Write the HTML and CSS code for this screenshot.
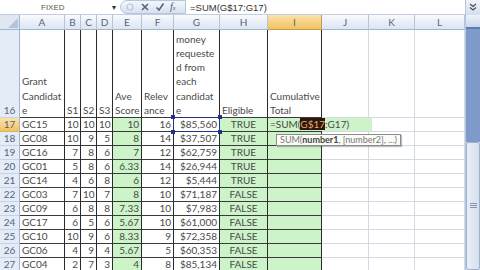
FILE: index.html
```html
<!DOCTYPE html>
<html>
<head>
<meta charset="utf-8">
<link rel="stylesheet" href="styles.css">
</head>
<body>
<div class="app">
  <div class="fbar">
    <div class="namebox"><span class="nb-text">FIXED</span></div>
    <div class="nb-dd">▾</div>
    <div class="fbtns">
      <svg class="ic" width="10" height="10" viewBox="0 0 10 10"><circle cx="5" cy="5" r="3" fill="none" stroke="#b9c6d8" stroke-width="1.2"/></svg>
      <svg class="ic" width="10" height="10" viewBox="0 0 10 10"><path d="M2 2 L8 8 M8 2 L2 8" stroke="#56657a" stroke-width="1.6"/></svg>
      <svg class="ic" width="10" height="10" viewBox="0 0 10 10"><path d="M1.5 5.5 L4 8 L8.5 1.5" fill="none" stroke="#56657a" stroke-width="1.6"/></svg>
      <span class="fx">f<span class="fxs">x</span></span>
    </div>
    <div class="formula">=SUM(G$17:G17)</div>
    <div class="expand"><svg width="10" height="10" viewBox="0 0 10 10"><path d="M2 2 L5 4.5 L8 2 M2 5.5 L5 8 L8 5.5" fill="none" stroke="#3e4d63" stroke-width="1.2"/></svg></div>
  </div>
  <div class="main">
    <div class="grid">
      <!-- header row -->
      <div class="corner"><svg width="10" height="10" viewBox="0 0 10 10"><path d="M10 0 L10 10 L0 10 Z" fill="#b6c4d8"/></svg></div>
      <div class="ch">A</div><div class="ch">B</div><div class="ch">C</div><div class="ch">D</div><div class="ch">E</div><div class="ch">F</div><div class="ch">G</div><div class="ch">H</div><div class="ch sel">I</div><div class="ch">J</div><div class="ch">K</div><div class="ch">L</div>
      <!-- row 16 -->
      <div class="rh bot">16</div>
      <div class="t hd">Grant<br>Candidat<br>e</div>
      <div class="t hd">S1</div>
      <div class="t hd">S2</div>
      <div class="t hd">S3</div>
      <div class="t hd">Ave<br>Score</div>
      <div class="t hd">Relev<br>ance</div>
      <div class="t hd">money<br>requeste<br>d from<br>each<br>candidat<br>e</div>
      <div class="t hd">Eligible</div>
      <div class="t hd">Cumulative<br>Total</div>
      <div class="c"></div><div class="c"></div><div class="c"></div>
      <!-- row 17 -->
      <div class="rh sel">17</div>
      <div class="t">GC15</div><div class="t r">10</div><div class="t r">10</div><div class="t r">10</div><div class="t r g">10</div><div class="t r">16</div>
      <div class="t r rel">$85,560<span class="refbox"><i class="h tl"></i><i class="h tr"></i><i class="h bl"></i><i class="h br"></i></span></div>
      <div class="t m g">TRUE</div>
      <div class="t g rel"><span class="editor">=SUM(<span class="selref">G$17</span>:G17)</span><span class="tip">SUM(<b>number1</b>, [number2], ...)</span></div>
      <div class="c"></div><div class="c"></div><div class="c"></div>
      <!-- row 18 -->
      <div class="rh">18</div>
      <div class="t">GC08</div><div class="t r">10</div><div class="t r">9</div><div class="t r">5</div><div class="t r g">8</div><div class="t r">14</div><div class="t r">$37,507</div><div class="t m g">TRUE</div><div class="t g"></div>
      <div class="c"></div><div class="c"></div><div class="c"></div>
      <!-- row 19 -->
      <div class="rh">19</div>
      <div class="t">GC16</div><div class="t r">7</div><div class="t r">8</div><div class="t r">6</div><div class="t r g">7</div><div class="t r">12</div><div class="t r">$62,759</div><div class="t m g">TRUE</div><div class="t g"></div>
      <div class="c"></div><div class="c"></div><div class="c"></div>
      <!-- row 20 -->
      <div class="rh">20</div>
      <div class="t">GC01</div><div class="t r">5</div><div class="t r">8</div><div class="t r">6</div><div class="t r g">6.33</div><div class="t r">14</div><div class="t r">$26,944</div><div class="t m g">TRUE</div><div class="t g"></div>
      <div class="c"></div><div class="c"></div><div class="c"></div>
      <!-- row 21 -->
      <div class="rh">21</div>
      <div class="t">GC14</div><div class="t r">4</div><div class="t r">6</div><div class="t r">8</div><div class="t r g">6</div><div class="t r">12</div><div class="t r">$5,444</div><div class="t m g">TRUE</div><div class="t g"></div>
      <div class="c"></div><div class="c"></div><div class="c"></div>
      <!-- row 22 -->
      <div class="rh">22</div>
      <div class="t">GC03</div><div class="t r">7</div><div class="t r">10</div><div class="t r">7</div><div class="t r g">8</div><div class="t r">10</div><div class="t r">$71,187</div><div class="t m g">FALSE</div><div class="t g"></div>
      <div class="c"></div><div class="c"></div><div class="c"></div>
      <!-- row 23 -->
      <div class="rh">23</div>
      <div class="t">GC09</div><div class="t r">6</div><div class="t r">8</div><div class="t r">8</div><div class="t r g">7.33</div><div class="t r">10</div><div class="t r">$7,983</div><div class="t m g">FALSE</div><div class="t g"></div>
      <div class="c"></div><div class="c"></div><div class="c"></div>
      <!-- row 24 -->
      <div class="rh">24</div>
      <div class="t">GC17</div><div class="t r">6</div><div class="t r">5</div><div class="t r">6</div><div class="t r g">5.67</div><div class="t r">10</div><div class="t r">$61,000</div><div class="t m g">FALSE</div><div class="t g"></div>
      <div class="c"></div><div class="c"></div><div class="c"></div>
      <!-- row 25 -->
      <div class="rh">25</div>
      <div class="t">GC10</div><div class="t r">10</div><div class="t r">9</div><div class="t r">6</div><div class="t r g">8.33</div><div class="t r">9</div><div class="t r">$72,358</div><div class="t m g">FALSE</div><div class="t g"></div>
      <div class="c"></div><div class="c"></div><div class="c"></div>
      <!-- row 26 -->
      <div class="rh">26</div>
      <div class="t">GC06</div><div class="t r">4</div><div class="t r">9</div><div class="t r">4</div><div class="t r g">5.67</div><div class="t r">5</div><div class="t r">$60,353</div><div class="t m g">FALSE</div><div class="t g"></div>
      <div class="c"></div><div class="c"></div><div class="c"></div>
      <!-- row 27 -->
      <div class="rh">27</div>
      <div class="t">GC04</div><div class="t r">2</div><div class="t r">7</div><div class="t r">3</div><div class="t r g">4</div><div class="t r">8</div><div class="t r">$85,134</div><div class="t m g">FALSE</div><div class="t g"></div>
      <div class="c"></div><div class="c"></div><div class="c"></div>
    </div>
    <div class="vscroll">
      <div class="vs-btn"></div>
      <div class="vs-track"></div>
      <div class="vs-thumb"><span class="grip"></span></div>
    </div>
  </div>
</div>
</body>
</html>
```

FILE: styles.css
```css
* { box-sizing: border-box; }
html, body { margin: 0; padding: 0; }
body {
  width: 480px;
  height: 270px;
  overflow: hidden;
  background: #ffffff;
  font-family: "Lato", "Liberation Sans", sans-serif;
  font-size: 10px;
  color: #4a4a4a;
}
.app { width: 480px; height: 270px; display: flex; flex-direction: column; }

/* formula bar */
.fbar {
  height: 15px;
  flex: none;
  display: flex;
  align-items: center;
  background: #ffffff;
  border-bottom: 1px solid #c3cfdf;
}
.namebox {
  width: 108px;
  height: 15px;
  padding-left: 41px;
  display: flex;
  align-items: center;
  font-family: "Liberation Sans", sans-serif;
  font-size: 8px;
  color: #555;
}
.nb-dd { width: 12px; font-size: 8px; color: #333; text-align: center; line-height: 15px; }
.fbtns {
  width: 66px;
  height: 14px;
  display: flex;
  align-items: center;
  gap: 5px;
  padding-left: 4px;
  border: 1px solid #b5c6dc;
  border-radius: 7px 0 0 7px;
  background: linear-gradient(#f3f7fc, #d6e1ef);
}
.ic { flex: none; }
.fx {
  font-family: "Liberation Serif", serif;
  font-style: italic;
  font-size: 10px;
  color: #4b5a70;
  line-height: 12px;
  height: 12px;
}
.fxs { font-size: 6px; }
.formula {
  flex: 1;
  padding-left: 4px;
  font-family: "Liberation Sans", sans-serif;
  font-size: 9.5px;
  color: #333;
}
.expand {
  width: 15px;
  height: 15px;
  display: flex;
  align-items: center;
  justify-content: center;
  background: linear-gradient(#f0f4fa, #d4deec);
  border-left: 1px solid #b5c6dc;
}

/* main area */
.main { flex: 1; display: flex; min-height: 0; }
.grid {
  width: 465px;
  display: grid;
  grid-template-columns: 20px 45px 16px 16px 16px 29px 32px 46px 48px 54px 47px 46px 50px;
  grid-template-rows: 15px 88px repeat(11, 14px);
  overflow: hidden;
}
.corner {
  background: #dfe7f2;
  border-right: 1px solid #9eb6ce;
  border-bottom: 1px solid #9eb6ce;
  display: flex;
  align-items: flex-end;
  justify-content: flex-end;
  padding: 0 1px 1px 0;
}
.ch {
  background: linear-gradient(#f8fafd, #dce5f1);
  border-right: 1px solid #b3c5db;
  border-bottom: 1px solid #9eb6ce;
  text-align: center;
  line-height: 14px;
  color: #56657a;
}
.ch.sel {
  background: linear-gradient(#fbe3a9, #f2c161);
  border-right-color: #c79a4a;
  border-bottom-color: #c79a4a;
}
.rh {
  background: #e4ecf7;
  border-right: 1px solid #9eb6ce;
  border-bottom: 1px solid #c5d3e5;
  text-align: center;
  line-height: 13px;
  color: #56657a;
}
.rh.bot { display: flex; align-items: flex-end; justify-content: center; }
.rh.sel { background: linear-gradient(#fbe3a9, #f2c161); border-bottom-color: #d8b265; }

.c, .t {
  border-right: 1px solid #d4dae4;
  border-bottom: 1px solid #d4dae4;
  line-height: 13px;
  padding: 0 2px;
  white-space: nowrap;
  overflow: hidden;
}
.t { border-right-color: #2b2b2b; border-bottom-color: #3a3a3a; }
.hd {
  display: flex;
  flex-direction: column;
  justify-content: flex-end;
  line-height: 14.2px;
  padding-bottom: 0;
}
.r { text-align: right; }
.m { text-align: center; }
.g { background: #cdf3c8; }
.rel { position: relative; overflow: visible; }

/* range reference highlight on G17 */
.refbox {
  position: absolute;
  left: -1px; top: -1px; right: -1px; bottom: -1px;
  border: 1px solid #23308c;
  pointer-events: none;
}
.h {
  position: absolute;
  width: 4px; height: 4px;
  background: #23308c;
}
.tl { left: -3px; top: -3px; }
.tr { right: -3px; top: -3px; }
.bl { left: -3px; bottom: -3px; }
.br { right: -3px; bottom: -3px; }

/* in-cell editor on I17 */
.editor {
  position: absolute;
  left: 0; top: 0;
  width: 104px;
  height: 13px;
  padding-left: 2px;
  background: #cdf3c8;
  z-index: 2;
  line-height: 13px;
}
.selref { background: #2a1710; color: #f0a860; }
.tip {
  position: absolute;
  left: 8px; top: 16px;
  height: 12px;
  padding: 0 3px;
  background: #fbfbf7;
  border: 1px solid #8c8c8c;
  box-shadow: 1px 1px 1px rgba(0,0,0,0.25);
  line-height: 10px;
  font-size: 9px;
  color: #777;
  white-space: nowrap;
  z-index: 3;
}
.tip b { color: #444; }

/* vertical scroll bar */
.vscroll {
  width: 15px;
  display: flex;
  flex-direction: column;
  border-left: 1px solid #b9c7da;
  background: #e7edf6;
}
.vs-btn {
  height: 14px;
  flex: none;
  background: linear-gradient(#eef3fa, #c9d7ea);
  border-bottom: 2px solid #5e7cac;
}
.vs-track { height: 113px; flex: none; background: #7e9bcb; }
.vs-thumb {
  flex: 1;
  background: linear-gradient(90deg, #e9eef6, #d6e0ee);
  border: 1px solid #9db0cc;
  border-radius: 2px;
  display: flex;
  justify-content: center;
  padding-top: 60px;
}
.grip {
  width: 7px;
  height: 5px;
  border-top: 1px solid #8394ad;
  border-bottom: 1px solid #8394ad;
  position: relative;
}
.grip::after {
  content: "";
  position: absolute;
  left: 0; right: 0; top: 1px;
  border-top: 1px solid #8394ad;
}
```
